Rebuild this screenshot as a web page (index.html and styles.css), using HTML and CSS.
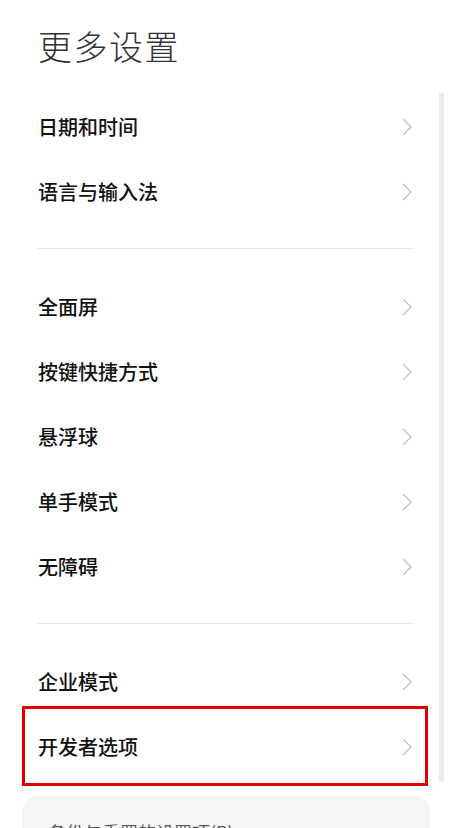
FILE: index.html
```html
<!DOCTYPE html>
<html lang="zh-CN">
<head>
    <meta charset="UTF-8">
    <meta name="viewport" content="width=device-width, initial-scale=1.0">
    <title>更多设置</title>
    <link rel="stylesheet" href="styles.css">
</head>
<body>
    <div class="pagina">
        <h1 class="titulo">更多设置</h1>

        <div class="grupo primero">
            <div class="fila"><span>日期和时间</span><svg class="flecha" viewBox="0 0 10 18"><polyline points="1,1 9,9 1,17"/></svg></div>
            <div class="fila"><span>语言与输入法</span><svg class="flecha" viewBox="0 0 10 18"><polyline points="1,1 9,9 1,17"/></svg></div>
        </div>

        <div class="grupo">
            <div class="fila"><span>全面屏</span><svg class="flecha" viewBox="0 0 10 18"><polyline points="1,1 9,9 1,17"/></svg></div>
            <div class="fila"><span>按键快捷方式</span><svg class="flecha" viewBox="0 0 10 18"><polyline points="1,1 9,9 1,17"/></svg></div>
            <div class="fila"><span>悬浮球</span><svg class="flecha" viewBox="0 0 10 18"><polyline points="1,1 9,9 1,17"/></svg></div>
            <div class="fila"><span>单手模式</span><svg class="flecha" viewBox="0 0 10 18"><polyline points="1,1 9,9 1,17"/></svg></div>
            <div class="fila"><span>无障碍</span><svg class="flecha" viewBox="0 0 10 18"><polyline points="1,1 9,9 1,17"/></svg></div>
        </div>

        <div class="grupo ultimo">
            <div class="fila"><span>企业模式</span><svg class="flecha" viewBox="0 0 10 18"><polyline points="1,1 9,9 1,17"/></svg></div>
            <div class="fila marcada"><span>开发者选项</span><svg class="flecha" viewBox="0 0 10 18"><polyline points="1,1 9,9 1,17"/></svg></div>
        </div>

        <div class="tarjeta">
            <p>备份与重置的设置项(R)</p>
        </div>
    </div>
    <div class="scroll"></div>
</body>
</html>
```

FILE: styles.css
```css
body {
    margin: 0;
    background: #fff;
    font-family: "Noto Sans CJK SC", "Noto Sans", sans-serif;
    color: #111;
    height: 828px;
    overflow: hidden;
    position: relative;
}
.pagina {
    width: 408px;
    margin-left: 22px;
    padding-top: 22px;
}
.titulo {
    margin: 0 0 24px 16px;
    font-size: 34px;
    line-height: 48px;
    font-weight: 300;
    color: #333;
    letter-spacing: 1.5px;
}
.grupo {
    margin: 0 17px 0 16px;
    padding: 25px 0 24px;
    border-bottom: 1px solid #e6e6e6;
}
.grupo.primero {
    padding-top: 0;
}
.grupo.ultimo {
    border-bottom: none;
    padding-bottom: 0;
}
.fila {
    height: 65px;
    display: flex;
    align-items: center;
    justify-content: space-between;
    font-size: 20px;
    font-weight: 500;
    position: relative;
}
.flecha {
    width: 10px;
    height: 18px;
    margin-right: 1px;
}
.flecha polyline {
    fill: none;
    stroke: #c2c2c2;
    stroke-width: 1.3;
}
.marcada::after {
    content: "";
    position: absolute;
    top: -8px;
    bottom: -7px;
    left: -16px;
    right: -15px;
    border: 3px solid #e00000;
}
.tarjeta {
    margin-top: 17px;
    height: 100px;
    background: #f5f5f5;
    border-radius: 16px;
    padding: 23px 26px 0;
}
.tarjeta p {
    margin: 0;
    font-size: 18px;
    line-height: 26px;
    color: #555;
}
.scroll {
    position: absolute;
    left: 439px;
    top: 93px;
    width: 5px;
    height: 689px;
    background: #ececec;
}
```
